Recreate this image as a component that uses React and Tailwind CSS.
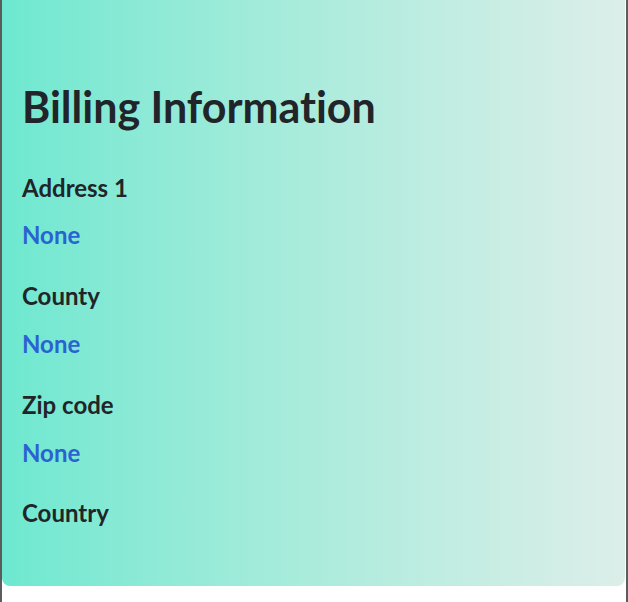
export default function App() {
  const items = [
    { label: "Address 1", value: "None" },
    { label: "County", value: "None" },
    { label: "Zip code", value: "None" },
    { label: "Country", value: null },
  ];
  return (
    <div className="w-[628px] h-[602px] bg-white border-l-2 border-r-2 border-[#5c5c5c] overflow-hidden [font-variant-ligatures:none]" style={{ fontFamily: "Lato, 'Noto Sans', sans-serif" }}>
      <div className="mr-px rounded-b-lg bg-gradient-to-r from-[#6de8d0] to-[#dceee9] px-5 pt-[81px] pb-[58px]">
        <h1 className="text-[43px] leading-[1.2] font-bold text-[#212529] mb-[41px]">Billing Information</h1>
        {items.map((it) => (
          <div key={it.label}>
            <div className="text-[24px] leading-[1.2] font-bold text-[#212529]">{it.label}</div>
            {it.value && (
              <div className="mt-[19px] mb-[32px] text-[24px] leading-[1.2] font-bold text-[#2a62d1]">{it.value}</div>
            )}
          </div>
        ))}
      </div>
    </div>
  );
}
